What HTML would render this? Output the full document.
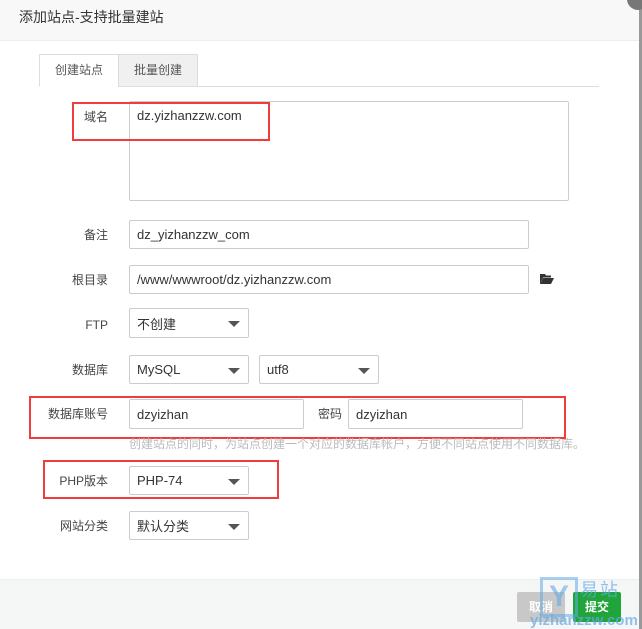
<!DOCTYPE html>
<html><head><meta charset="utf-8"><style>
*{box-sizing:border-box;margin:0;padding:0}
body{width:642px;height:629px;background:#fff;font-family:"Liberation Sans","Noto Sans CJK SC",sans-serif;font-size:12px;color:#333;position:relative;overflow:hidden}
.a{position:absolute}
.title{left:0;top:0;width:639px;height:41px;background:#f8f8f8;border-bottom:1px solid #eee;padding:7px 0 0 19px;font-size:14px;color:#333;line-height:20px}
.rb{right:0;top:0;width:3px;height:629px;background:#999}
.inp{border:1px solid #ccc;border-radius:2px;background:#fff;padding-left:7px;font-size:13px;color:#333;display:flex;align-items:center}
.sel::after{content:"";position:absolute;right:8px;top:12px;border-left:6px solid transparent;border-right:6px solid transparent;border-top:6px solid #555}
.lab{width:80px;text-align:right;font-size:12px;color:#444}
.red{border:2px solid #f03c3c}
</style></head><body>
<div class="a title">添加站点-支持批量建站</div>
<div class="a rb"></div>
<div class="a" style="left:627px;top:-12px;width:22px;height:22px;border-radius:50%;background:#777"></div>
<div class="a" style="left:40px;top:86px;width:559px;height:1px;background:#ddd"></div>
<div class="a" style="left:39px;top:54px;width:80px;height:33px;border:1px solid #ddd;border-bottom:1px solid #fff;background:#fff;text-align:center;line-height:31px;color:#555">创建站点</div>
<div class="a" style="left:118px;top:54px;width:80px;height:33px;border:1px solid #ddd;background:#f0f0f0;text-align:center;line-height:31px;color:#555">批量创建</div>

<div class="a inp" style="left:129px;top:101px;width:440px;height:100px;align-items:flex-start;padding-top:6px">dz.yizhanzzw.com</div>
<div class="a lab" style="left:28px;top:108px">域名</div>
<div class="a red" style="left:72px;top:102px;width:198px;height:39px"></div>

<div class="a lab" style="left:28px;top:226px">备注</div>
<div class="a inp" style="left:129px;top:220px;width:400px;height:29px">dz_yizhanzzw_com</div>
<div class="a lab" style="left:28px;top:271px">根目录</div>
<div class="a inp" style="left:129px;top:265px;width:400px;height:29px">/www/wwwroot/dz.yizhanzzw.com</div>
<svg class="a" style="left:539px;top:273px" width="16" height="12" viewBox="0 0 16 12"><path d="M1 1h5l1 1.5h5v2H4L1 11z" fill="#333"/><path d="M4 5h11l-3 6H1z" fill="#333"/></svg>

<div class="a lab" style="left:28px;top:318px">FTP</div>
<div class="a inp sel" style="left:129px;top:308px;width:120px;height:30px">不创建</div>
<div class="a lab" style="left:28px;top:361px">数据库</div>
<div class="a inp sel" style="left:129px;top:355px;width:120px;height:29px">MySQL</div>
<div class="a inp sel" style="left:259px;top:355px;width:120px;height:29px">utf8</div>

<div class="a lab" style="left:28px;top:405px">数据库账号</div>
<div class="a inp" style="left:129px;top:399px;width:175px;height:30px">dzyizhan</div>
<div class="a" style="left:318px;top:405px;color:#444">密码</div>
<div class="a inp" style="left:348px;top:399px;width:175px;height:30px">dzyizhan</div>
<div class="a red" style="left:29px;top:396px;width:537px;height:43px"></div>
<div class="a" style="left:129px;top:435px;color:#bbb;font-size:12px">创建站点的同时，为站点创建一个对应的数据库帐户，方便不同站点使用不同数据库。</div>

<div class="a lab" style="left:28px;top:472px">PHP版本</div>
<div class="a inp sel" style="left:129px;top:466px;width:120px;height:29px">PHP-74</div>
<div class="a red" style="left:43px;top:460px;width:236px;height:39px"></div>

<div class="a lab" style="left:28px;top:517px">网站分类</div>
<div class="a inp sel" style="left:129px;top:511px;width:120px;height:29px">默认分类</div>

<div class="a" style="left:0;top:579px;width:639px;height:50px;background:#f5f6f6;border-top:1px solid #eee"></div>
<div class="a" style="left:517px;top:592px;width:48px;height:30px;background:#c8c8c8;border-radius:2px;color:#fff;text-align:center;line-height:30px;font-weight:bold">取消</div>
<div class="a" style="left:573px;top:592px;width:48px;height:30px;background:#20a53a;border-radius:2px;color:#fff;text-align:center;line-height:30px;font-weight:bold">提交</div>
<div class="a" style="left:540px;top:577px;width:38px;height:40px;border:3px solid rgba(100,170,230,.55);color:rgba(100,170,230,.6);font-size:30px;font-weight:bold;line-height:34px;text-align:center">Y</div>
<div class="a" style="left:580px;top:576px;color:rgba(100,170,230,.7);font-size:18px;letter-spacing:2px">易站</div>
<div class="a" style="left:530px;top:612px;color:rgba(100,170,230,.7);font-size:15px;font-weight:bold">yizhanzzw.com</div>
</body></html>
